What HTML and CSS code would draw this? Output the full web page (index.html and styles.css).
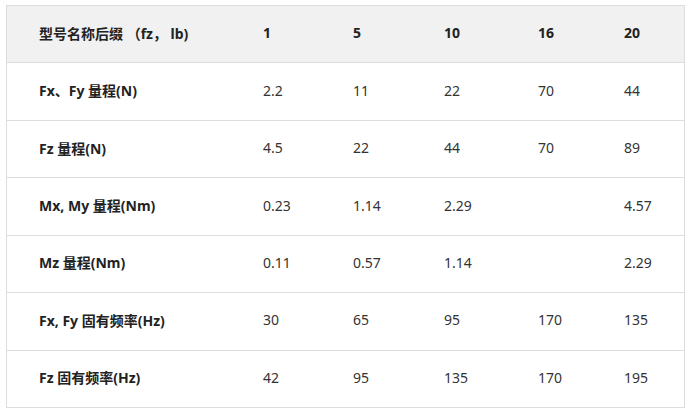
FILE: index.html
```html
<!DOCTYPE html>
<html lang="zh-CN">
<head>
<meta charset="utf-8">
<link rel="stylesheet" href="styles.css">
</head>
<body>
<table class="spec">
  <colgroup>
    <col class="c-label">
    <col class="c-1">
    <col class="c-5">
    <col class="c-10">
    <col class="c-16">
    <col class="c-20">
  </colgroup>
  <thead>
    <tr>
      <th>型号名称后缀 （fz， lb)</th>
      <th>1</th>
      <th>5</th>
      <th>10</th>
      <th>16</th>
      <th>20</th>
    </tr>
  </thead>
  <tbody>
    <tr><th>Fx、Fy 量程(N)</th><td>2.2</td><td>11</td><td>22</td><td>70</td><td>44</td></tr>
    <tr><th>Fz 量程(N)</th><td>4.5</td><td>22</td><td>44</td><td>70</td><td>89</td></tr>
    <tr><th>Mx, My 量程(Nm)</th><td>0.23</td><td>1.14</td><td>2.29</td><td></td><td>4.57</td></tr>
    <tr><th>Mz 量程(Nm)</th><td>0.11</td><td>0.57</td><td>1.14</td><td></td><td>2.29</td></tr>
    <tr><th>Fx, Fy 固有频率(Hz)</th><td>30</td><td>65</td><td>95</td><td>170</td><td>135</td></tr>
    <tr><th>Fz 固有频率(Hz)</th><td>42</td><td>95</td><td>135</td><td>170</td><td>195</td></tr>
  </tbody>
</table>
</body>
</html>
```
FILE: styles.css
```css
html, body {
  margin: 0;
  padding: 0;
  background: #ffffff;
}
body {
  padding: 5px 0 0 6px;
  font-family: "Noto Sans", "Noto Sans CJK SC", sans-serif;
  font-size: 14px;
  color: #333333;
}
.spec {
  border-collapse: collapse;
  width: 678px;
  table-layout: fixed;
}
.c-label { width: 224px; }
.c-1 { width: 90px; }
.c-5 { width: 91px; }
.c-10 { width: 94px; }
.c-16 { width: 86px; }
.c-20 { width: 93px; }
.spec th,
.spec td {
  border: 1px solid #dddddd;
  height: 57.45px;
  padding: 0 0 3px 32px;
  text-align: left;
  vertical-align: middle;
  box-sizing: border-box;
}
.spec th {
  font-weight: bold;
  color: #222222;
}
.spec td {
  font-weight: normal;
  color: #333333;
}
.spec td:not(:last-child),
.spec th:not(:last-child) {
  border-left-color: transparent;
  border-right-color: transparent;
}
.spec tr > :first-child {
  border-left-color: #dddddd;
}
.spec thead th {
  background: #f1f1f1;
}
```
